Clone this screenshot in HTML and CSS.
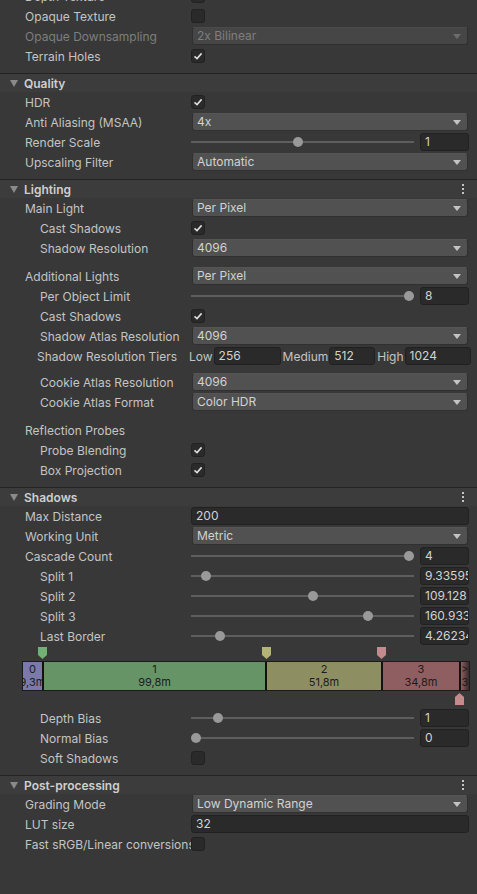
FILE: index.html
```html
<!DOCTYPE html>
<html lang="en">
<head>
    <meta charset="utf-8" />
    <title>Universal Render Pipeline Asset</title>
    <link rel="stylesheet" href="styles.css">
</head>
<body>

<div class="inspector">

    <!-- Rendering (tail) -->
    <div class="row">
        <div class="label">Depth Texture</div>
        <div class="field"><span class="toggle"></span></div>
    </div>
    <div class="row">
        <div class="label">Opaque Texture</div>
        <div class="field"><span class="toggle"></span></div>
    </div>
    <div class="row disabled">
        <div class="label">Opaque Downsampling</div>
        <div class="field"><div class="popup">2x Bilinear</div></div>
    </div>
    <div class="row">
        <div class="label">Terrain Holes</div>
        <div class="field"><span class="toggle on"></span></div>
    </div>

    <!-- Quality -->
    <div class="header">
        <span class="fold"></span>
        <span class="title">Quality</span>
    </div>
    <div class="row">
        <div class="label">HDR</div>
        <div class="field"><span class="toggle on"></span></div>
    </div>
    <div class="row">
        <div class="label">Anti Aliasing (MSAA)</div>
        <div class="field"><div class="popup">4x</div></div>
    </div>
    <div class="row">
        <div class="label">Render Scale</div>
        <div class="field slider-field">
            <div class="slider"><span class="thumb" style="--p:0.479"></span></div>
            <div class="number">1</div>
        </div>
    </div>
    <div class="row">
        <div class="label">Upscaling Filter</div>
        <div class="field"><div class="popup">Automatic</div></div>
    </div>

    <!-- Lighting -->
    <div class="header">
        <span class="fold"></span>
        <span class="title">Lighting</span>
        <span class="menu"><i></i><i></i><i></i></span>
    </div>
    <div class="row">
        <div class="label">Main Light</div>
        <div class="field"><div class="popup">Per Pixel</div></div>
    </div>
    <div class="row">
        <div class="label sub">Cast Shadows</div>
        <div class="field"><span class="toggle on"></span></div>
    </div>
    <div class="row">
        <div class="label sub">Shadow Resolution</div>
        <div class="field"><div class="popup">4096</div></div>
    </div>

    <div class="row spaced">
        <div class="label">Additional Lights</div>
        <div class="field"><div class="popup">Per Pixel</div></div>
    </div>
    <div class="row">
        <div class="label sub">Per Object Limit</div>
        <div class="field slider-field">
            <div class="slider"><span class="thumb" style="--p:1"></span></div>
            <div class="number">8</div>
        </div>
    </div>
    <div class="row">
        <div class="label sub">Cast Shadows</div>
        <div class="field"><span class="toggle on"></span></div>
    </div>
    <div class="row">
        <div class="label sub">Shadow Atlas Resolution</div>
        <div class="field"><div class="popup">4096</div></div>
    </div>
    <div class="row">
        <div class="label tiers-label">Shadow Resolution Tiers</div>
        <div class="tiers">
            <span class="tier-name">Low</span>
            <div class="number tier-low">256</div>
            <span class="tier-name">Medium</span>
            <div class="number tier-mid">512</div>
            <span class="tier-name">High</span>
            <div class="number tier-high">1024</div>
        </div>
    </div>

    <div class="row spaced-sm">
        <div class="label sub">Cookie Atlas Resolution</div>
        <div class="field"><div class="popup">4096</div></div>
    </div>
    <div class="row">
        <div class="label sub">Cookie Atlas Format</div>
        <div class="field"><div class="popup">Color HDR</div></div>
    </div>

    <div class="row spaced">
        <div class="label">Reflection Probes</div>
    </div>
    <div class="row">
        <div class="label sub">Probe Blending</div>
        <div class="field"><span class="toggle on"></span></div>
    </div>
    <div class="row">
        <div class="label sub">Box Projection</div>
        <div class="field"><span class="toggle on"></span></div>
    </div>

    <!-- Shadows -->
    <div class="header">
        <span class="fold"></span>
        <span class="title">Shadows</span>
        <span class="menu"><i></i><i></i><i></i></span>
    </div>
    <div class="row">
        <div class="label">Max Distance</div>
        <div class="field"><div class="number wide">200</div></div>
    </div>
    <div class="row">
        <div class="label">Working Unit</div>
        <div class="field"><div class="popup">Metric</div></div>
    </div>
    <div class="row">
        <div class="label">Cascade Count</div>
        <div class="field slider-field">
            <div class="slider"><span class="thumb" style="--p:1"></span></div>
            <div class="number">4</div>
        </div>
    </div>
    <div class="row">
        <div class="label sub">Split 1</div>
        <div class="field slider-field">
            <div class="slider"><span class="thumb" style="--p:0.047"></span></div>
            <div class="number">9.335958</div>
        </div>
    </div>
    <div class="row">
        <div class="label sub">Split 2</div>
        <div class="field slider-field">
            <div class="slider"><span class="thumb" style="--p:0.549"></span></div>
            <div class="number">109.128</div>
        </div>
    </div>
    <div class="row">
        <div class="label sub">Split 3</div>
        <div class="field slider-field">
            <div class="slider"><span class="thumb" style="--p:0.808"></span></div>
            <div class="number">160.9333</div>
        </div>
    </div>
    <div class="row">
        <div class="label sub">Last Border</div>
        <div class="field slider-field">
            <div class="slider"><span class="thumb" style="--p:0.113"></span></div>
            <div class="number">4.262345</div>
        </div>
    </div>

    <!-- Cascade split preview -->
    <div class="cascades">
        <svg class="marker m1" width="9" height="12" viewBox="0 0 9 12"><polygon points="0,0 9,0 9,8 4.5,12 0,8" fill="#74b074"/></svg>
        <svg class="marker m2" width="9" height="12" viewBox="0 0 9 12"><polygon points="0,0 9,0 9,8 4.5,12 0,8" fill="#b4b479"/></svg>
        <svg class="marker m3" width="9" height="12" viewBox="0 0 9 12"><polygon points="0,0 9,0 9,8 4.5,12 0,8" fill="#c48a8c"/></svg>
        <div class="cascade-bar">
            <div class="cascade c0"><span>0</span><span>9,3m</span></div>
            <div class="cascade c1"><span>1</span><span>99,8m</span></div>
            <div class="cascade c2"><span>2</span><span>51,8m</span></div>
            <div class="cascade c3"><span>3</span><span>34,8m</span></div>
            <div class="cascade c4"><span>&gt;</span><span>3</span></div>
        </div>
        <svg class="marker m4" width="9" height="12" viewBox="0 0 9 12"><polygon points="4.5,0 9,4 9,12 0,12 0,4" fill="#c48a8c"/></svg>
    </div>

    <div class="row">
        <div class="label sub">Depth Bias</div>
        <div class="field slider-field">
            <div class="slider"><span class="thumb" style="--p:0.103"></span></div>
            <div class="number">1</div>
        </div>
    </div>
    <div class="row">
        <div class="label sub">Normal Bias</div>
        <div class="field slider-field">
            <div class="slider"><span class="thumb" style="--p:0"></span></div>
            <div class="number">0</div>
        </div>
    </div>
    <div class="row">
        <div class="label sub">Soft Shadows</div>
        <div class="field"><span class="toggle"></span></div>
    </div>

    <!-- Post-processing -->
    <div class="header">
        <span class="fold"></span>
        <span class="title">Post-processing</span>
        <span class="menu"><i></i><i></i><i></i></span>
    </div>
    <div class="row">
        <div class="label">Grading Mode</div>
        <div class="field"><div class="popup">Low Dynamic Range</div></div>
    </div>
    <div class="row">
        <div class="label">LUT size</div>
        <div class="field"><div class="number wide">32</div></div>
    </div>
    <div class="row">
        <div class="label">Fast sRGB/Linear conversions</div>
        <div class="field"><span class="toggle"></span></div>
    </div>

</div>

</body>
</html>
```

FILE: styles.css
```css
/* Unity dark inspector palette */
:root {
    --bg: #383838;
    --text: #c4c4c4;
    --text-dim: #7e7e7e;
    --field: #2a2a2a;
    --field-border: #212121;
    --popup: #515151;
    --line: #232323;
}

body {
    margin: 0;
    background: var(--bg);
    color: var(--text);
    font-family: Inter, "Noto Sans", sans-serif;
    font-size: 12px;
    overflow: hidden;
}

/* Page starts part way into the Rendering section */
.inspector {
    margin-top: -14px;
    width: 477px;
}

/* Property rows */
.row {
    display: flex;
    align-items: center;
    height: 20px;
}

.spaced {
    margin-top: 8px;
}

.spaced-sm {
    margin-top: 6px;
}

.label {
    box-sizing: border-box;
    flex: 0 0 191px;
    padding-left: 25px;
    white-space: nowrap;
    overflow: hidden;
}

.label.sub {
    padding-left: 40px;
}

.field {
    flex: 0 0 278px;
    display: flex;
    align-items: center;
}

.disabled .label,
.disabled .popup {
    color: var(--text-dim);
}

/* Foldout headers */
.header {
    display: flex;
    align-items: center;
    height: 18px;
    margin-top: 7px;
    border-top: 1px solid var(--line);
    background: #3c3c3c;
    font-weight: 600;
    color: #cfcfcf;
}

.fold {
    width: 0;
    height: 0;
    margin: 0 6px 0 10px;
    border-left: 4px solid transparent;
    border-right: 4px solid transparent;
    border-top: 7px solid #8a8a8a;
}

.title {
    flex: 1;
}

.menu {
    display: flex;
    flex-direction: column;
    gap: 2px;
    margin-right: 13px;
}

.menu i {
    width: 2px;
    height: 2px;
    background: #c4c4c4;
}

/* Toggles */
.toggle {
    box-sizing: border-box;
    width: 14px;
    height: 14px;
    border: 1px solid var(--field-border);
    border-radius: 3px;
    background: var(--field);
}

.toggle.on {
    background: var(--field) url("data:image/svg+xml,%3Csvg xmlns='http://www.w3.org/2000/svg' width='12' height='12'%3E%3Cpath d='M2.5 6.3 L5 8.6 L9.6 3.4' fill='none' stroke='%23dcdcdc' stroke-width='1.6'/%3E%3C/svg%3E") center / 12px 12px no-repeat;
}

/* Dropdowns */
.popup {
    box-sizing: border-box;
    flex: 1;
    height: 18px;
    margin: 0 1px;
    padding-left: 4px;
    line-height: 16px;
    border: 1px solid #303030;
    border-top-color: #555555;
    border-radius: 3px;
    background: var(--popup);
    color: #d2d2d2;
    position: relative;
}

.popup::after {
    content: "";
    position: absolute;
    right: 6px;
    top: 6px;
    border-left: 4px solid transparent;
    border-right: 4px solid transparent;
    border-top: 5px solid #c4c4c4;
}

.disabled .popup {
    background: #464646;
    border-top-color: #4a4a4a;
}

.disabled .popup::after {
    border-top-color: #6c6c6c;
}

/* Numeric fields */
.number {
    box-sizing: border-box;
    height: 18px;
    padding-left: 4px;
    line-height: 16px;
    border: 1px solid var(--field-border);
    border-radius: 3px;
    background: var(--field);
    color: #d2d2d2;
    white-space: nowrap;
    overflow: hidden;
}

.number.wide {
    flex: 1;
}

/* Sliders */
.slider-field {
    gap: 6px;
}

.slider-field .number {
    flex: 0 0 49px;
}

.slider {
    flex: 1;
    height: 18px;
    position: relative;
}

.slider::before {
    content: "";
    position: absolute;
    left: 0;
    right: 0;
    top: 8px;
    height: 2px;
    background: #5e5e5e;
}

.thumb {
    position: absolute;
    top: 4px;
    left: calc(var(--p) * (100% - 10px));
    width: 10px;
    height: 10px;
    border-radius: 50%;
    background: #999999;
}

/* Shadow resolution tiers */
.label.tiers-label {
    flex-basis: 189px;
    padding-left: 37px;
}

.tiers {
    display: flex;
    align-items: center;
}

.tier-name {
    padding-right: 1px;
}

.tiers .number {
    margin-right: 2px;
}

.tier-low {
    width: 67px;
}

.tier-mid {
    width: 46px;
}

.tier-high {
    width: 66px;
}

/* Cascade split preview */
.cascades {
    position: relative;
    height: 62px;
    padding: 15px 0 0 22px;
    box-sizing: border-box;
}

.cascade-bar {
    display: flex;
    width: 448px;
    height: 30px;
    box-sizing: border-box;
    border: 1px solid #1b1b1b;
    background: #1b1b1b;
}

.cascade {
    display: flex;
    flex-direction: column;
    justify-content: center;
    align-items: center;
    overflow: hidden;
    font-size: 11px;
    line-height: 13px;
    color: #1c1c1c;
    white-space: nowrap;
}

.cascade + .cascade {
    border-left: 2px solid #111111;
}

.c0 { width: 19px; background: #7b7aab; }
.c1 { width: 221px; background: #679466; }
.c2 { width: 114px; background: #8e8e63; }
.c3 { width: 76px; background: #8e5e61; }
.c4 { flex: 1; background: linear-gradient(to right, #8e5e61, #3a2a2b); }

.marker {
    position: absolute;
    display: block;
}

.m1 { left: 38px; top: 1px; }
.m2 { left: 262px; top: 1px; }
.m3 { left: 377px; top: 1px; }
.m4 { left: 455px; top: 47px; }
```
